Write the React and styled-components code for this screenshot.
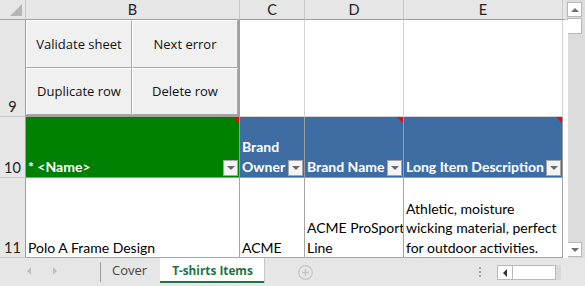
import styled, { createGlobalStyle } from 'styled-components';

const GlobalStyle = createGlobalStyle`
  html, body { margin: 0; padding: 0; background: #fff; }
  body { width: 585px; height: 286px; overflow: hidden; }
  * { box-sizing: border-box; }
`;

const Window = styled.div`
  width: 585px;
  height: 286px;
  display: flex;
  flex-direction: column;
  font-family: Lato, "Liberation Sans", sans-serif;
  background: #e6e6e6;
`;

const Main = styled.div`
  display: flex;
  height: 258px;
`;

const Sheet = styled.div`
  display: grid;
  grid-template-columns: 26px 214px 65px 99px 159px 3px;
  grid-template-rows: 20px 97px 61px 80px;
  width: 566px;
  background: #fff;
`;

const Corner = styled.div`
  background: #e6e6e6;
  border-right: 1px solid #c8c8c8;
  border-bottom: 1px solid #a6a6a6;
  display: flex;
  align-items: flex-end;
  justify-content: flex-end;
  padding: 0 3px 3px 0;
`;

const ColHead = styled.div`
  background: #e6e6e6;
  border-right: 1px solid ${p => (p.$last ? 'transparent' : '#c8c8c8')};
  border-bottom: 1px solid #9f9f9f;
  display: flex;
  align-items: center;
  justify-content: center;
  font-size: 14.5px;
  color: #222;
`;

const RowHead = styled.div`
  background: #e6e6e6;
  border-right: 1px solid #9f9f9f;
  border-bottom: 1px solid #c8c8c8;
  display: flex;
  align-items: flex-end;
  justify-content: center;
  font-size: 14.5px;
  line-height: 19px;
  color: #222;
`;

const Cell = styled.div`
  position: relative;
  display: flex;
  flex-direction: column;
  justify-content: flex-end;
  padding: 0 2px 0 2px;
  background: ${p => p.$bg || '#fff'};
  color: ${p => p.$color || '#000'};
  font-weight: ${p => (p.$bold ? 700 : 400)};
  font-size: 14px;
  line-height: ${p => p.$lh || '19.5px'};
  border-right: 1px solid ${p => p.$line || '#d4d4d4'};
  border-bottom: 1px solid ${p => p.$line || '#d4d4d4'};
  white-space: nowrap;
  overflow: hidden;
`;

const ButtonGrid = styled.div`
  display: grid;
  grid-template-columns: 1fr 1fr;
  grid-template-rows: 1fr 1fr;
  background: #f0f0f0;
  border-right: 2px solid #a0a0a0;
  border-bottom: 2px solid #a0a0a0;
`;

const SheetButton = styled.div`
  display: flex;
  align-items: center;
  justify-content: center;
  background: #f0f0f0;
  border-style: solid;
  border-width: 1px;
  border-color: #fff #a9a9a9 #a9a9a9 #fff;
  font-family: "Open Sans", "Liberation Sans", sans-serif;
  font-size: 13px;
  color: #111;
`;

const Comment = styled.span`
  position: absolute;
  top: 0;
  right: 0;
  width: 0;
  height: 0;
  border-top: 6px solid #ff0000;
  border-left: 6px solid transparent;
`;

const Dropdown = styled.span`
  position: absolute;
  right: 1px;
  bottom: 1px;
  width: 15px;
  height: 16px;
  background: #f4f4f4;
  border: 1px solid #a6a6a6;
  display: flex;
  align-items: center;
  justify-content: center;
  &::after {
    content: '';
    border-top: 4px solid #6a6a6a;
    border-left: 4px solid transparent;
    border-right: 4px solid transparent;
  }
`;

const VScroll = styled.div`
  width: 19px;
  background: #dcdcdc;
  display: flex;
  flex-direction: column;
  padding: 2px 3px 1px 1px;
`;

const ScrollBtn = styled.div`
  height: ${p => p.$h || 15}px;
  margin-top: ${p => p.$gap || 0}px;
  background: #fff;
  border: 1px solid #b9b9b9;
  display: flex;
  align-items: center;
  justify-content: center;
  &::after {
    content: '';
    display: ${p => (p.$dir ? 'block' : 'none')};
    border-left: 4px solid transparent;
    border-right: 4px solid transparent;
    ${p => (p.$dir === 'up' ? 'border-bottom: 4px solid #707070;' : 'border-top: 4px solid #707070;')}
  }
`;

const Track = styled.div`
  flex: 1;
`;

const TabBar = styled.div`
  height: 28px;
  display: flex;
  align-items: flex-start;
  background: #e6e6e6;
  font-family: "Open Sans", "Liberation Sans", sans-serif;
  font-size: 13px;
`;

const NavArrows = styled.div`
  width: 100px;
  height: 25px;
  display: flex;
  align-items: center;
  gap: 22px;
  padding-left: 27px;
`;

const NavArrow = styled.span`
  width: 0;
  height: 0;
  border-top: 4px solid transparent;
  border-bottom: 4px solid transparent;
  ${p => (p.$left ? 'border-right: 4px solid #bdbdbd;' : 'border-left: 4px solid #bdbdbd;')}
`;

const Separator = styled.span`
  width: 1px;
  height: 20px;
  margin-top: 4px;
  background: #9a9a9a;
`;

const Tab = styled.div`
  height: 25px;
  padding: 0 ${p => (p.$active ? '11px' : '13px')} 0 ${p => (p.$active ? '12px' : '11px')};
  display: flex;
  align-items: center;
  background: ${p => (p.$active ? '#fff' : 'transparent')};
  color: ${p => (p.$active ? '#217346' : '#444')};
  font-weight: ${p => (p.$active ? 700 : 400)};
  font-size: ${p => (p.$active ? '11.8px' : '13px')};
  border-bottom: 2px solid ${p => (p.$active ? '#217346' : 'transparent')};
  box-shadow: ${p => (p.$active ? '1px 0 0 #c6c6c6' : 'none')};
`;

const AddSheet = styled.div`
  margin: 7px 0 0 34px;
  width: 15px;
  height: 15px;
`;

const Dots = styled.div`
  margin: 9px 0 0 166px;
  width: 3px;
  display: flex;
  flex-direction: column;
  gap: 2px;
  span {
    width: 2px;
    height: 2px;
    background: #a0a0a0;
  }
`;

const HScroll = styled.div`
  margin: 7px 0 0 15px;
  display: flex;
  height: 15px;
`;

const HThumb = styled.div`
  width: 59px;
  height: 15px;
  background: #fff;
  border: 1px solid #b9b9b9;
  display: flex;
`;

const HBtn = styled.div`
  width: 15px;
  border-right: 1px solid #b9b9b9;
  display: flex;
  align-items: center;
  justify-content: center;
  &::after {
    content: '';
    border-top: 4px solid transparent;
    border-bottom: 4px solid transparent;
    border-right: 4px solid #333;
  }
`;

const HTrack = styled.div`
  width: 5px;
  height: 15px;
  background: #d9d9d9;
`;

const blue = '#3e6da4';
const green = '#008000';
const head = '#9b9b9b';
const border = '#a6a6a6';

const App = () => {
  return (
    <>
      <GlobalStyle />
      <Window>
        <Main>
          <Sheet>
            <Corner>
              <svg width="12" height="12" viewBox="0 0 12 12">
                <polygon points="12,0 12,12 0,12" fill="#b5b5b5" />
              </svg>
            </Corner>
            <ColHead>B</ColHead>
            <ColHead>C</ColHead>
            <ColHead>D</ColHead>
            <ColHead>E</ColHead>
            <ColHead $last />

            <RowHead>9</RowHead>
            <ButtonGrid>
              <SheetButton>Validate sheet</SheetButton>
              <SheetButton>Next error</SheetButton>
              <SheetButton>Duplicate row</SheetButton>
              <SheetButton>Delete row</SheetButton>
            </ButtonGrid>
            <Cell $line="#d4d4d4" />
            <Cell $line="#d4d4d4" />
            <Cell $line="#d4d4d4" />
            <Cell $line="transparent" />

            <RowHead>10</RowHead>
            <Cell $bg={green} $color="#fff" $bold $line={head} $lh="20px">
              * &lt;Name&gt;
              <Comment />
              <Dropdown />
            </Cell>
            <Cell $bg={blue} $color="#fff" $bold $line={head} $lh="20px">
              <span>Brand</span>
              <span>Owner</span>
              <Dropdown />
            </Cell>
            <Cell $bg={blue} $color="#fff" $bold $line={head} $lh="20px">
              Brand Name
              <Comment />
              <Dropdown />
            </Cell>
            <Cell $bg={blue} $color="#fff" $bold $line={head} $lh="20px">
              Long Item Description
              <Comment />
              <Dropdown />
            </Cell>
            <Cell $line="transparent" />

            <RowHead>11</RowHead>
            <Cell $line={border}>Polo A Frame Design</Cell>
            <Cell $line={border}>ACME</Cell>
            <Cell $line={border}>
              <span>ACME ProSport</span>
              <span>Line</span>
            </Cell>
            <Cell $line={border}>
              <span>Athletic, moisture</span>
              <span>wicking material, perfect</span>
              <span>for outdoor activities.</span>
            </Cell>
            <Cell $line="transparent" />
          </Sheet>
          <VScroll>
            <ScrollBtn $dir="up" $h={15} />
            <ScrollBtn $h={16} $gap={1} />
            <Track />
            <ScrollBtn $dir="down" $h={15} />
          </VScroll>
        </Main>
        <TabBar>
          <NavArrows>
            <NavArrow $left />
            <NavArrow />
          </NavArrows>
          <Separator />
          <Tab>Cover</Tab>
          <Tab $active>T-shirts Items</Tab>
          <AddSheet>
            <svg width="15" height="15" viewBox="0 0 15 15">
              <circle cx="7.5" cy="7.5" r="6.8" fill="none" stroke="#c4c4c4" strokeWidth="1.2" />
              <path d="M7.5 4v7M4 7.5h7" stroke="#c4c4c4" strokeWidth="1.4" />
            </svg>
          </AddSheet>
          <Dots>
            <span />
            <span />
            <span />
          </Dots>
          <HScroll>
            <HThumb>
              <HBtn />
            </HThumb>
            <HTrack />
          </HScroll>
        </TabBar>
      </Window>
    </>
  );
};

export default App;
